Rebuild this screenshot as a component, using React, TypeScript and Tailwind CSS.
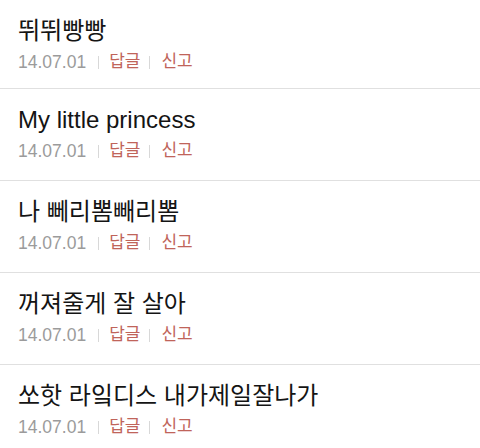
const comments = [
  '뛰뛰빵빵',
  'My little princess',
  '나 뻬리뽐빼리뽐',
  '꺼져줄게 잘 살아',
  '쏘핫 라잌디스 내가제일잘나가',
]

const font = "font-['Liberation_Sans','Noto_Sans_CJK_KR',sans-serif]"

function Sep({ className }: { className: string }) {
  return <span className={`w-px h-[13px] bg-[#d8d8d8] ${className}`} />
}

export default function App() {
  return (
    <div className={`w-[480px] h-[448px] overflow-hidden bg-white ${font}`}>
      {comments.map((c, i) => (
        <div
          key={i}
          className="pl-[18px] pt-[17px] pb-[18px] first:pb-[15px] border-b border-[#e0e0e0]"
        >
          <div className="text-[24px] leading-[28px] text-[#141414]">{c}</div>
          <div className="mt-[6px] h-[22px] flex items-center">
            <span className="text-[17.5px] leading-[22px] text-[#9b9b9b]">14.07.01</span>
            <Sep className="ml-[12px] mr-[10px]" />
            <span className="text-[17px] leading-[22px] text-[#c0645a]">답글</span>
            <Sep className="ml-[9px] mr-[11px]" />
            <span className="text-[17px] leading-[22px] text-[#c0645a]">신고</span>
          </div>
        </div>
      ))}
    </div>
  )
}
